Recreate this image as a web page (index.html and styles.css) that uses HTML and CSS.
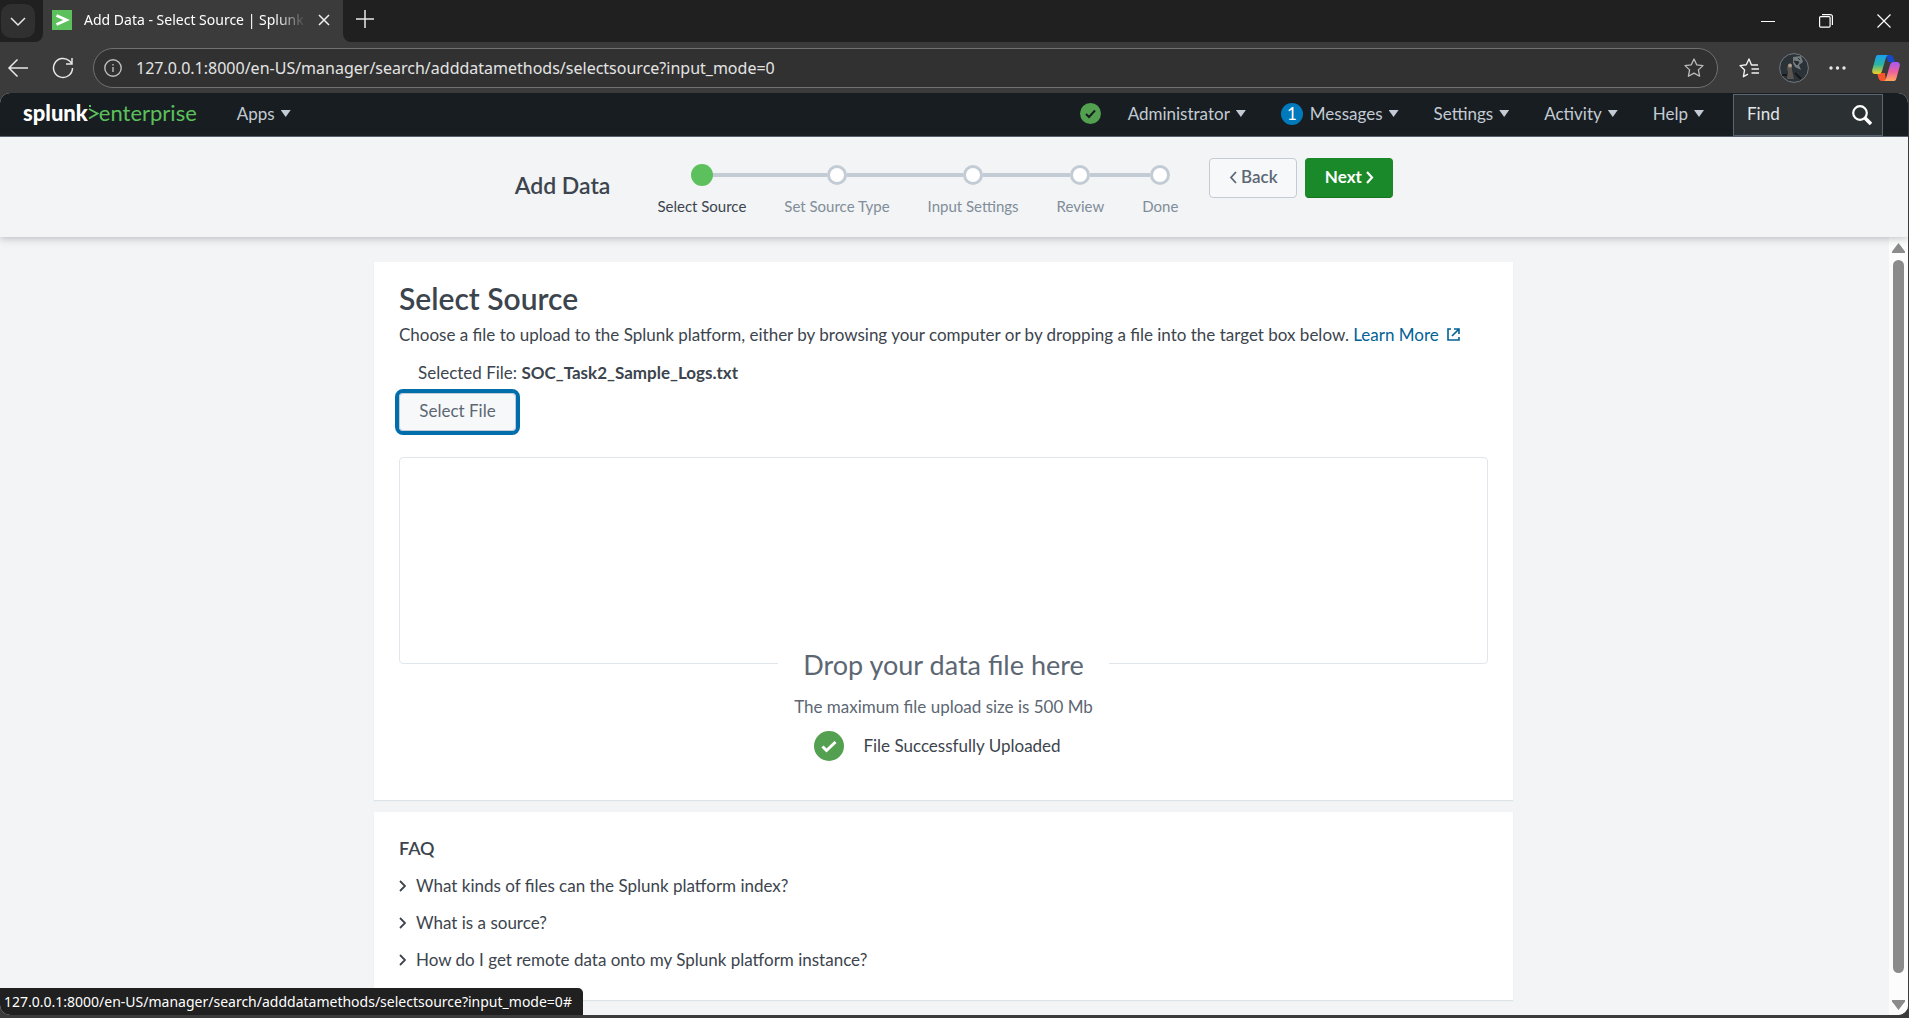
FILE: index.html
```html
<!DOCTYPE html>
<html lang="en">
<head>
<meta charset="utf-8">
<meta name="viewport" content="width=device-width, initial-scale=1">
<title>Add Data - Select Source | Splunk</title>
<link rel="stylesheet" href="styles.css">
</head>
<body>
<div class="window">
  <div class="tabstrip">
    <div class="tab-menu-wrap">
      <button class="tab-menu" aria-label="Tab actions"><svg width="18" height="18" viewBox="0 0 18 18" fill="none" stroke="#e8e8e8" stroke-width="1.5"><path d="M2 6l7 7 7-7"/></svg></button>
    </div>
    <div class="tab">
      <svg class="favicon" width="20" height="20" viewBox="0 0 20 20"><path fill="#5cc05c" d="M0 0h20v20H0z"/><path d="M4.500 5.500L14.500 10 4.500 14.500" fill="none" stroke="#fff" stroke-width="2.800"/></svg>
      <span class="tab-title">Add Data - Select Source | Splunk</span>
      <button class="icon-btn" aria-label="Close tab"><svg width="12" height="12" viewBox="0 0 12 12" stroke="#f0f0f0" stroke-width="1.500"><path d="M1 1l10 10M11 1L1 11"/></svg></button>
    </div>
    <button class="icon-btn new-tab" aria-label="New tab"><svg width="18" height="18" viewBox="0 0 18 18" stroke="#e8e8e8" stroke-width="1.500"><path d="M9 0v18M0 9h18"/></svg></button>
    <div class="window-controls">
      <button class="icon-btn" aria-label="Minimize"><svg width="14" height="14" viewBox="0 0 14 14" stroke="#fff"><path d="M0 7.500h14"/></svg></button>
      <button class="icon-btn" aria-label="Restore"><svg width="14" height="14" viewBox="0 0 14 14" fill="none" stroke="#fff" stroke-width="1.200"><rect x=".6" y="2.600" width="10.500" height="10.500" rx="1"/><path d="M3 .6h8.400a2 2 0 0 1 2 2V11"/></svg></button>
      <button class="icon-btn" aria-label="Close window"><svg width="14" height="14" viewBox="0 0 14 14" stroke="#fff" stroke-width="1.200"><path d="M.5.500l13 13M13.500.500l-13 13"/></svg></button>
    </div>
  </div>

  <div class="toolbar">
    <button class="icon-btn" aria-label="Back"><svg width="22" height="20" viewBox="0 0 22 20" fill="none" stroke="#e8e8e8" stroke-width="1.500"><path d="M21 10H2M10.500 1.500L2 10l8.500 8.500"/></svg></button>
    <button class="icon-btn" aria-label="Refresh"><svg width="22" height="22" viewBox="0 0 22 22" fill="none" stroke="#e8e8e8" stroke-width="1.500"><path d="M20.500 11a9.500 9.500 0 1 1-3-7L20 6.500M20 1v6h-6"/></svg></button>
    <div class="address">
      <svg width="18" height="18" viewBox="0 0 18 18" fill="none" stroke="#bdbdbd" stroke-width="1.400"><circle cx="9" cy="9" r="8.200"/><path d="M9 8v5M9 5v1.500"/></svg>
      <input class="url" type="text" aria-label="Address" value="127.0.0.1:8000/en-US/manager/search/adddatamethods/selectsource?input_mode=0">
      <button class="icon-btn" aria-label="Add to favorites"><svg width="20" height="20" viewBox="0 0 20 20" fill="none" stroke="#bdbdbd" stroke-width="1.300" stroke-linejoin="round"><path d="M10 1l2.700 5.800 6.300.8-4.600 4.300 1.200 6.300L10 15.100l-5.600 3.100 1.200-6.300L1 7.600l6.300-.8z"/></svg></button>
    </div>
    <div class="toolbar-actions">
      <button class="icon-btn" aria-label="Favorites"><svg width="20" height="20" viewBox="0 0 20 20" fill="none" stroke="#f0f0f0" stroke-width="1.400" stroke-linejoin="round"><path d="M19 7h-6.500L10 1 7.300 6.800 1 7.600l4.600 4.300-1.200 6.800L9 16.200M12.500 11H20M12.500 15H20"/></svg></button>
      <button class="icon-btn" aria-label="Profile"><svg width="30" height="30" viewBox="0 0 30 30"><circle cx="15" cy="15" r="14.400" fill="#2b3238" stroke="#747a80" stroke-width="1"/><path d="M14 4l8-1 2 6-4 3 2 5-6-3-2-4z" fill="#737b7f"/><path d="M15 8l5 1-2 3zM19 5l2 2" fill="#23292d" stroke="#23292d"/><path d="M9 12h4v5l2 9H8l1-7-1-4z" fill="#5b5550"/><circle cx="11" cy="12.500" r="2" fill="#a99c8c"/><path d="M3 22h5M16 20l6 6" stroke="#15191c" stroke-width="2"/></svg></button>
      <button class="icon-btn" aria-label="More"><svg width="17" height="4" viewBox="0 0 17 4" fill="#e8e8e8"><circle cx="2" cy="2" r="1.700"/><circle cx="8.500" cy="2" r="1.700"/><circle cx="15" cy="2" r="1.700"/></svg></button>
      <button class="icon-btn copilot" aria-label="Copilot"><svg width="28" height="28" viewBox="0 0 28 28"><defs><linearGradient id="ca" x1="0" y1="0" x2="0" y2="1"><stop offset="0" stop-color="#1a9ff0"/><stop offset=".5" stop-color="#2bb5a0"/><stop offset="1" stop-color="#f5d021"/></linearGradient><linearGradient id="cb" x1="0" y1="0" x2="0" y2="1"><stop offset="0" stop-color="#a35af2"/><stop offset=".5" stop-color="#ee5fa0"/><stop offset="1" stop-color="#ffa85a"/></linearGradient></defs><path d="M14 1h4c2 0 3 1 3.500 3L23 8h-7z" fill="#1648c9"/><path d="M14 27h-4c-2 0-3-1-3.500-3L5 19h8z" fill="#f8542c"/><path d="M6 1h11c-2 0-3 2-3.500 4L10 17c-.6 2-1.500 3-3.500 3H3c-2.500 0-3.400-2-2.500-5L3.500 4C4 2 4.600 1 6 1z" fill="url(#ca)"/><path d="M22 27H11c2 0 3-2 3.500-4L18 11c.6-2 1.500-3 3.500-3H25c2.500 0 3.400 2 2.500 5l-3 11c-.6 2-1 3-2.500 3z" fill="url(#cb)"/></svg></button>
    </div>
  </div>

  <div class="page">
    <nav class="navbar">
      <a class="logo" href="#"><b>splunk</b><svg width="11" height="15" viewBox="0 0 11 15" fill="none" stroke="#5cc05c" stroke-width="1.800"><path d="M1 4l8.500 4.500L1 13.500"/><path d="M1 1h2"/></svg><span>enterprise</span></a>
      <button class="menu">Apps<i class="caret"></i></button>
      <div class="nav-right">
        <button class="menu" aria-label="Health status"><svg width="21" height="21" viewBox="0 0 21 21"><circle cx="10.500" cy="10.500" r="10.500" fill="#53a051"/><path d="M6 11l3 3 6-6.500" fill="none" stroke="#171d21" stroke-width="2"/></svg></button>
        <button class="menu admin">Administrator<i class="caret"></i></button>
        <button class="menu"><span class="badge">1</span>Messages<i class="caret"></i></button>
        <button class="menu">Settings<i class="caret"></i></button>
        <button class="menu">Activity<i class="caret"></i></button>
        <button class="menu">Help<i class="caret"></i></button>
      </div>
      <form class="find">
        <input type="text" placeholder="Find" aria-label="Find">
        <button class="icon-btn" type="button" aria-label="Search"><svg width="20" height="20" viewBox="0 0 20 20" fill="none" stroke="#fff"><circle cx="8" cy="8" r="6.800" stroke-width="2.200"/><path d="M13 13l6 6" stroke-width="3.600"/></svg></button>
      </form>
    </nav>

    <header class="wizard">
      <h1>Add Data</h1>
      <ol class="steps">
        <li class="current"><span class="track"><i class="dot"></i></span><span class="label">Select Source</span></li>
        <li><span class="track"><i class="dot"></i></span><span class="label">Set Source Type</span></li>
        <li><span class="track"><i class="dot"></i></span><span class="label">Input Settings</span></li>
        <li><span class="track"><i class="dot"></i></span><span class="label">Review</span></li>
        <li><span class="track"><i class="dot"></i></span><span class="label">Done</span></li>
      </ol>
      <div class="wizard-buttons">
        <button class="btn"><svg width="8" height="13" viewBox="0 0 8 13" fill="none" stroke="currentColor" stroke-width="1.800"><path d="M7 1L2 6.500 7 12"/></svg>Back</button>
        <button class="btn primary">Next<svg width="8" height="13" viewBox="0 0 8 13" fill="none" stroke="currentColor" stroke-width="2.200"><path d="M1 1l5 5.500L1 12"/></svg></button>
      </div>
    </header>

    <div class="viewport">
      <main class="content">
        <section class="card">
          <h2>Select Source</h2>
          <p class="intro">Choose a file to upload to the Splunk platform, either by browsing your computer or by dropping a file into the target box below. <a href="#">Learn More <svg width="13" height="13" viewBox="0 0 13 13" fill="none" stroke="currentColor" stroke-width="1.600"><path d="M4 1H1v11h11V9M7 1h5v5M12 1L5 8"/></svg></a></p>
          <p class="selected">Selected File: <b>SOC_Task2_Sample_Logs.txt</b></p>
          <button class="btn select-file">Select File</button>
          <div class="dropzone"></div>
          <div class="drop-text">
            <h3>Drop your data file here</h3>
            <p>The maximum file upload size is 500 Mb</p>
            <p class="success"><svg width="30" height="30" viewBox="0 0 30 30"><circle cx="15" cy="15" r="15" fill="#53a051"/><path d="M8.500 15.500l4 4L21.500 11" fill="none" stroke="#fff" stroke-width="3"/></svg>File Successfully Uploaded</p>
          </div>
        </section>
        <section class="card faq">
          <h4>FAQ</h4>
          <details><summary><svg width="7" height="12" viewBox="0 0 7 12" fill="none" stroke="currentColor" stroke-width="1.800"><path d="M1 1l5 5-5 5"/></svg>What kinds of files can the Splunk platform index?</summary></details>
          <details><summary><svg width="7" height="12" viewBox="0 0 7 12" fill="none" stroke="currentColor" stroke-width="1.800"><path d="M1 1l5 5-5 5"/></svg>What is a source?</summary></details>
          <details><summary><svg width="7" height="12" viewBox="0 0 7 12" fill="none" stroke="currentColor" stroke-width="1.800"><path d="M1 1l5 5-5 5"/></svg>How do I get remote data onto my Splunk platform instance?</summary></details>
        </section>
      </main>
      <div class="scrollbar">
        <svg width="13" height="10" viewBox="0 0 13 10" fill="#8b8b8b"><path d="M6.500 0L13 8.500V10H0V8.500z"/></svg>
        <div class="thumb"></div>
        <svg width="13" height="10" viewBox="0 0 13 10" fill="#8b8b8b"><path d="M6.500 10L0 1.500V0h13v1.500z"/></svg>
      </div>
    </div>
    <div class="status">127.0.0.1:8000/en-US/manager/search/adddatamethods/selectsource?input_mode=0#</div>
  </div>
</div>
</body>
</html>
```
FILE: styles.css
```css
* { box-sizing: border-box; }

body {
  margin: 0;
  font: 17px/24px Lato, "Liberation Sans", sans-serif;
  color: #3c444d;
  background: #3b3b3b;
}

button, input { font: inherit; color: inherit; margin: 0; padding: 0; border: 0; background: none; }
h1, h2, h3, h4, p, ol { margin: 0; padding: 0; }
svg { display: block; flex: none; }

.window { display: flex; flex-direction: column; height: 100vh; }
.icon-btn { display: flex; align-items: center; justify-content: center; flex: none; }

/* Browser chrome */
.tabstrip {
  display: flex;
  align-items: stretch;
  height: 42px;
  flex: none;
  background: #3b3b3b;
  font-family: "Noto Sans", sans-serif;
  color: #fff;
}
.tab-menu-wrap { width: 43px; padding: 4px 8px 4px 1px; background: #202020; border-bottom-right-radius: 8px; }
.tab-menu { display: flex; align-items: center; justify-content: center; width: 34px; height: 34px; border-radius: 10px; background: #303030; }
.tab { display: flex; align-items: center; gap: 12px; width: 300px; padding: 0 13px 2px 9px; background: #3b3b3b; }
.tab-title {
  flex: 1;
  overflow: hidden;
  white-space: nowrap;
  font-size: 14px;
  mask-image: linear-gradient(to right, #000 86%, transparent);
}
.new-tab { width: 44px; background: #202020; border-bottom-left-radius: 8px; padding: 0 0 4px; }
.window-controls { display: flex; flex: 1; justify-content: flex-end; gap: 44px; padding-right: 18px; background: #202020; }

.toolbar { display: flex; align-items: center; height: 51px; flex: none; padding: 0 9px 0 7px; gap: 23px; }
.address {
  display: flex;
  align-items: center;
  flex: 1;
  height: 40px;
  margin-left: -4px;
  padding: 0 13px 0 10px;
  gap: 14px;
  border: 1px solid #707070;
  border-radius: 20px;
  background: #313131;
}
.url { flex: 1; min-width: 0; font: 16px/24px "Noto Sans", sans-serif; color: #e4e4e4; outline: none; }
.toolbar-actions { display: flex; align-items: center; gap: 20px; margin-left: -2px; }
.copilot { margin-left: 6px; }

/* Splunk bar */
.page { position: relative; display: flex; flex-direction: column; flex: 1; min-height: 0; margin: 0 1px 3px 0; border-radius: 10px; overflow: hidden; background: #f2f4f5; }
.navbar {
  display: flex;
  align-items: center;
  height: 44px;
  flex: none;
  padding: 0 25px 0 23px;
  background: #171d21;
  border-bottom: 1px solid #5c6773;
  color: #c3cbd4;
}
.logo { display: flex; align-items: center; margin-right: 40px; padding-bottom: 4px; font-size: 22px; line-height: 36px; color: #5cc05c; text-decoration: none; }
.logo b { color: #fff; font-weight: 900; }
.menu { display: flex; align-items: center; line-height: 36px; padding-bottom: 2px; }
.caret { width: 10px; height: 7px; margin-left: 6px; background: currentColor; clip-path: polygon(0 0, 100% 0, 50% 100%); }
.nav-right { display: flex; flex: 1; justify-content: flex-end; gap: 35px; margin-right: 29px; }
.admin { margin-left: -8px; }
.badge { width: 22px; height: 22px; margin-right: 7px; border-radius: 50%; background: #007abd; color: #fff; line-height: 22px; text-align: center; }
.find { display: flex; align-items: center; align-self: stretch; width: 150px; margin-top: 1px; padding: 0 10px 0 13px; border: 1px solid #5c6773; background: #2b3033; }
.find input { flex: 1; min-width: 0; padding-bottom: 2px; color: #e1e6eb; outline: none; }
.find input::placeholder { color: #e1e6eb; opacity: 1; }

/* Wizard header */
.wizard {
  position: relative;
  display: flex;
  justify-content: center;
  height: 100px;
  flex: none;
  padding-top: 21px;
  background: #f2f4f5;
  box-shadow: 0 1px 8px rgba(60, 68, 77, .35);
}
.wizard h1 { font-size: 23px; font-weight: 600; line-height: 54px; margin-right: 28px; }
.steps { display: flex; list-style: none; margin-right: 12px; font-size: 15px; line-height: 28px; color: #818d99; white-space: nowrap; }
.steps li { display: flex; flex-direction: column; text-align: center; }
.steps .current { color: #3c444d; }
.label { padding: 0 19px; }
.track { display: flex; align-items: center; height: 34px; }
.track::before, .track::after { content: ""; flex: 1; height: 4px; background: #c3cbd4; }
.steps li:first-child .track::before, .steps li:last-child .track::after { background: none; }
.dot { width: 20px; height: 20px; border: 3px solid #c3cbd4; border-radius: 50%; background: #fff; }
.current .dot { width: 22px; height: 22px; border: 0; background: #5cc05c; }
.wizard-buttons { display: flex; align-items: flex-start; gap: 8px; }

.btn {
  display: flex;
  align-items: center;
  justify-content: center;
  gap: 4px;
  height: 40px;
  padding: 0 17px 2px;
  border: 1px solid #c3cbd4;
  border-radius: 4px;
  background: #f7f8fa;
  color: #5c6773;
  font-weight: 600;
}
.wizard .btn { min-width: 88px; }
.primary { border-color: #1a8929 #1a8929 #157321; background: #1a8929; color: #fff; font-weight: 700; }

/* Page body */
.viewport { display: flex; flex: 1; min-height: 0; }
.content { flex: 1; padding: 25px 22px 0 20px; overflow: hidden; }
.card { max-width: 1139px; margin: 0 auto 12px; padding: 19px 25px 39px; background: #fff; box-shadow: 0 1px 1px #dce3e8; }
.card a { color: #006297; text-decoration: none; }
h2 { font-size: 30px; font-weight: 600; line-height: 34px; }
.intro { margin-top: 8px; }
.intro svg { display: inline; margin-left: 4px; }
.selected { margin: 14px 0 8px 19px; }
.select-file { height: 38px; min-width: 117px; padding: 0 18px 2px; font-weight: 400; outline: 4px solid #006eaa; outline-offset: 0; }
.dropzone { height: 207px; margin-top: 26px; border: 1px solid #e1e6eb; border-radius: 4px; }
.drop-text { display: flex; flex-direction: column; align-items: center; margin-top: -17px; color: #5c6773; }
h3 { padding: 0 25px; background: #fff; font-size: 27px; font-weight: 400; line-height: 36px; }
.drop-text p { margin-top: 12px; }
.drop-text .success { display: flex; align-items: center; gap: 19px; padding-right: 12px; color: #3c444d; }

.faq { padding: 24px 25px 28px; }
h4 { font-size: 18px; font-weight: 600; line-height: 24px; }
summary { display: flex; align-items: center; gap: 10px; margin-top: 13px; list-style: none; }
details:first-of-type summary { margin-top: 14px; }

.scrollbar { display: flex; flex-direction: column; align-items: center; gap: 7px; width: 19px; padding: 6px 0 5px; background: #fcfcfc; }
.thumb { width: 11px; flex: 1; margin-bottom: 20px; border-radius: 6px; background: #8b8b8b; }

.status {
  position: absolute;
  left: 0;
  bottom: 0;
  padding: 2px 11px 2px 4px;
  border-top-right-radius: 5px;
  background: #202020;
  color: #fff;
  font: 14px/23px "Noto Sans", sans-serif;
}
```
